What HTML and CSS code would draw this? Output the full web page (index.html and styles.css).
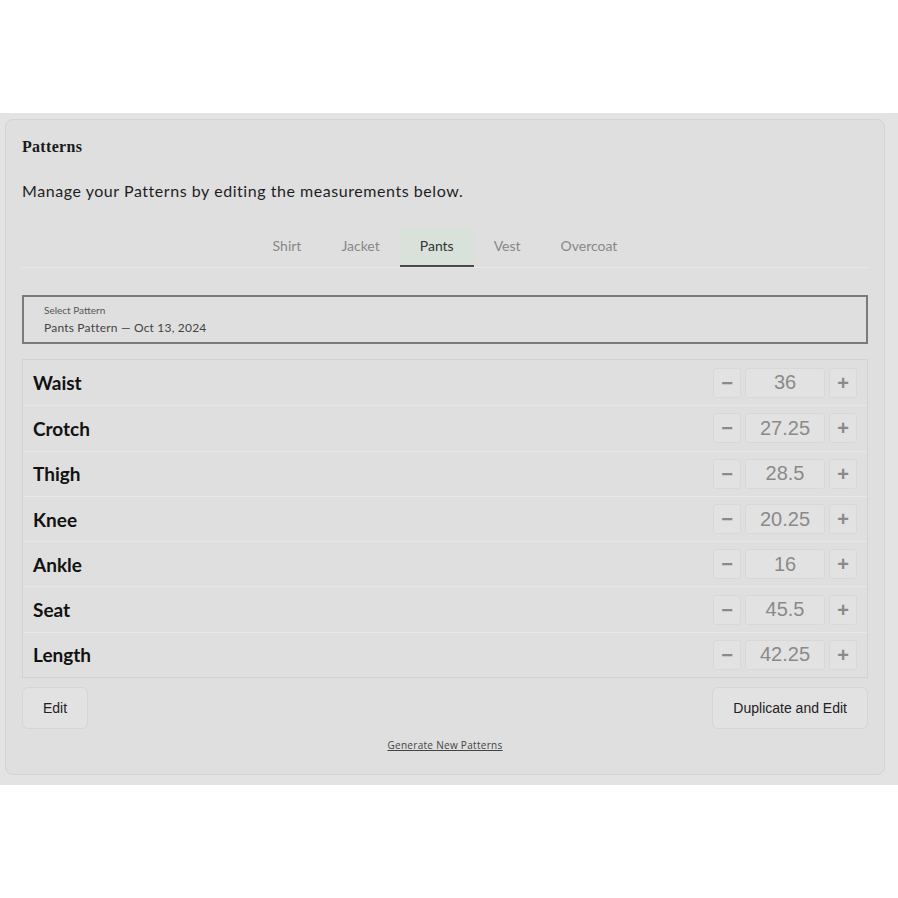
FILE: index.html
```html
<!DOCTYPE html>
<html lang="en">
<head>
  <meta charset="UTF-8">
  <meta name="viewport" content="width=device-width, initial-scale=1.0">
  <title>Patterns</title>
  <link rel="stylesheet" href="styles.css">
</head>
<body>
  <div class="band">
    <div class="card">
      <h2 class="card-title">Patterns</h2>
      <p class="intro">Manage your Patterns by editing the measurements below.</p>

      <div class="tabs">
        <button class="tab">Shirt</button>
        <button class="tab">Jacket</button>
        <button class="tab active">Pants</button>
        <button class="tab">Vest</button>
        <button class="tab">Overcoat</button>
      </div>

      <div class="select-box">
        <div class="select-label">Select Pattern</div>
        <div class="select-value">Pants Pattern — Oct 13, 2024</div>
      </div>

      <div class="measurements">
        <div class="row">
          <span class="name">Waist</span>
          <div class="stepper"><button class="step">&minus;</button><span class="value">36</span><button class="step">+</button></div>
        </div>
        <div class="row">
          <span class="name">Crotch</span>
          <div class="stepper"><button class="step">&minus;</button><span class="value">27.25</span><button class="step">+</button></div>
        </div>
        <div class="row">
          <span class="name">Thigh</span>
          <div class="stepper"><button class="step">&minus;</button><span class="value">28.5</span><button class="step">+</button></div>
        </div>
        <div class="row">
          <span class="name">Knee</span>
          <div class="stepper"><button class="step">&minus;</button><span class="value">20.25</span><button class="step">+</button></div>
        </div>
        <div class="row">
          <span class="name">Ankle</span>
          <div class="stepper"><button class="step">&minus;</button><span class="value">16</span><button class="step">+</button></div>
        </div>
        <div class="row">
          <span class="name">Seat</span>
          <div class="stepper"><button class="step">&minus;</button><span class="value">45.5</span><button class="step">+</button></div>
        </div>
        <div class="row">
          <span class="name">Length</span>
          <div class="stepper"><button class="step">&minus;</button><span class="value">42.25</span><button class="step">+</button></div>
        </div>
      </div>

      <div class="actions">
        <button class="btn">Edit</button>
        <button class="btn">Duplicate and Edit</button>
      </div>

      <div class="footer-link"><a href="#">Generate New Patterns</a></div>
    </div>
  </div>
</body>
</html>
```

FILE: styles.css
```css
body {
  margin: 0;
  padding-top: 113px;
  background: #fff;
  font-family: Lato, 'Open Sans', sans-serif;
}
.band {
  background-color: #e3e3e3;
  padding: 6px 13px 10px 5px;
}
.card {
  background-color: #dfdfdf;
  border: 1px solid #d3d3d3;
  border-radius: 8px;
  padding: 17px 16px 22px 16px;
}
.card-title {
  font-family: 'Liberation Serif', serif;
  font-size: 16px;
  font-weight: bold;
  color: #1a1a1a;
  margin: 0;
  line-height: 20px;
  letter-spacing: 0.3px;
}
.intro {
  font-size: 16px;
  color: #1e1e1e;
  margin: 24px 0 27px;
  letter-spacing: 0.55px;
}
.tabs {
  display: flex;
  justify-content: center;
  border-bottom: 1px solid #e8e8e8;
  margin-bottom: 27px;
}
.tab {
  font-family: Lato, sans-serif;
  font-size: 14px;
  color: #888;
  background: none;
  border: none;
  border-bottom: 2px solid transparent;
  padding: 10px 20px 11px;
  cursor: pointer;
}
.tab.active {
  background-color: #d9e2da;
  color: #333;
  border-bottom-color: #4a4a4a;
}
.select-box {
  border: 2px solid #7a7a7a;
  padding: 7px 20px 7px;
  margin-bottom: 15px;
}
.select-label {
  font-size: 10px;
  color: #555;
  line-height: 13px;
}
.select-value {
  font-size: 12px;
  color: #444;
  margin-top: 3px;
  line-height: 15px;
  letter-spacing: 0.2px;
}
.measurements {
  border: 1px solid #d2d2d2;
}
.row {
  display: flex;
  align-items: center;
  justify-content: space-between;
  box-sizing: border-box;
  height: 45.3px;
  padding: 0 10px;
  border-top: 1px solid #e6e6e6;
}
.row:first-child {
  border-top: none;
}
.name {
  font-size: 19px;
  font-weight: bold;
  color: #111;
}
.stepper {
  display: flex;
  gap: 4px;
}
.step, .value {
  height: 30px;
  box-sizing: border-box;
  border: 1px solid #d8d8d8;
  border-radius: 3px;
  background-color: #e2e2e2;
  color: #8a8a8a;
  font-family: 'Liberation Sans', Arial, sans-serif;
}
.step {
  width: 28px;
  font-size: 20px;
  font-weight: bold;
  line-height: 26px;
  padding: 0;
}
.value {
  display: flex;
  align-items: center;
  justify-content: center;
  width: 80px;
  font-size: 20px;
}
.actions {
  display: flex;
  justify-content: space-between;
  margin-top: 9px;
}
.btn {
  font-family: 'Liberation Sans', Arial, sans-serif;
  font-size: 14px;
  color: #222;
  background-color: #e2e2e2;
  border: 1px solid #d6d6d6;
  border-radius: 6px;
  padding: 0 20px;
  height: 42px;
  cursor: pointer;
}
.footer-link {
  text-align: center;
  margin-top: 9px;
  font-size: 10px;
  line-height: 14px;
}
.footer-link a {
  color: #444;
  font-family: 'Open Sans', sans-serif;
  letter-spacing: 0.3px;
}
```
